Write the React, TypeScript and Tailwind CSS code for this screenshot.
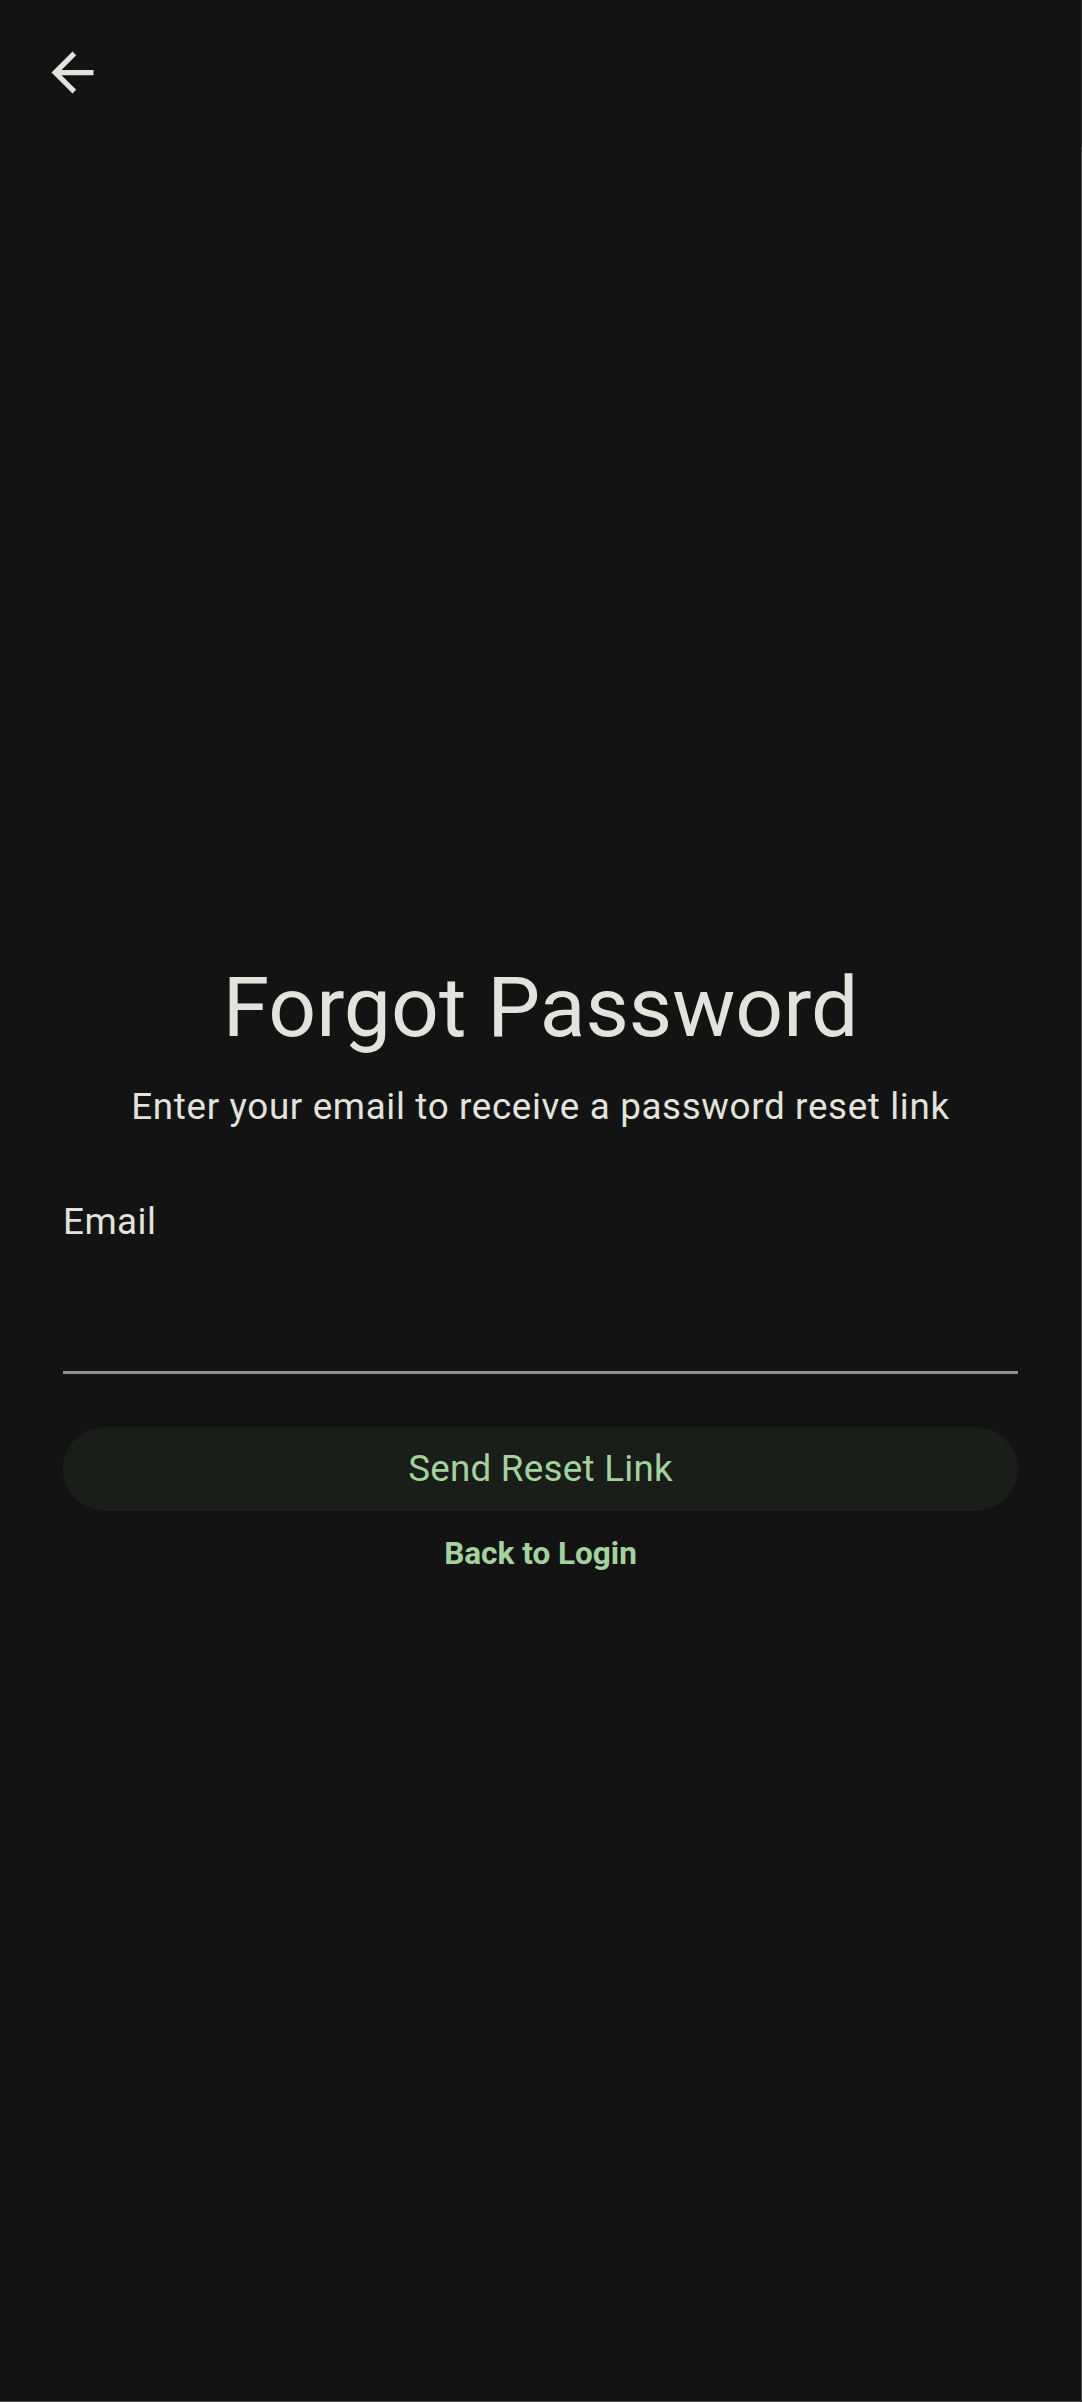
import { useState } from "react";

function BackArrow() {
  return (
    <svg viewBox="0 0 24 24" className="h-[63px] w-[63px]" fill="#e2e3dc">
      <path d="M20 11H7.83l5.59-5.59L12 4l-8 8 8 8 1.41-1.41L7.83 13H20v-2z" />
    </svg>
  );
}

export default function App() {
  const [email, setEmail] = useState("");

  return (
    <div
      className="flex min-h-[2402px] w-full flex-col bg-[#131313] text-[#e2e3dc]"
      style={{ fontFamily: "Roboto, 'Noto Sans', sans-serif" }}
    >
      {/* top bar */}
      <div className="flex h-[147px] items-start border-r border-[#2a2a2a] pl-[41px] pt-[41px]">
        <button aria-label="Back">
          <BackArrow />
        </button>
      </div>

      {/* form, centered below the bar */}
      <div className="flex flex-1 flex-col justify-center border-r border-b border-[#4a4a4a] px-[63px] pb-[17px]">
        <h1 className="text-center text-[84px] font-normal leading-[100px]">Forgot Password</h1>
        <p className="mt-[24px] text-center text-[36.75px] leading-[50px] tracking-[0.656px]">
          Enter your email to receive a password reset link
        </p>

        <label className="mt-[65px] text-[36.75px] leading-[50px] tracking-[0.5px]">Email</label>
        <input
          type="email"
          value={email}
          onChange={(e) => setEmail(e.target.value)}
          className="h-[127px] w-full border-b-[3px] border-[#8d918a] bg-transparent text-[42px] text-[#e2e3dc] outline-none"
        />

        <button className="mt-[53px] flex h-[84px] w-full items-center justify-center rounded-full bg-[#1a1e19] text-[36.75px] tracking-[0.26px] text-[#a3d39c]">
          Send Reset Link
        </button>

        <button className="mx-auto mt-[23px] text-[31.5px] font-bold leading-[40px] text-[#a3d39c]">
          Back to Login
        </button>
      </div>
    </div>
  );
}
